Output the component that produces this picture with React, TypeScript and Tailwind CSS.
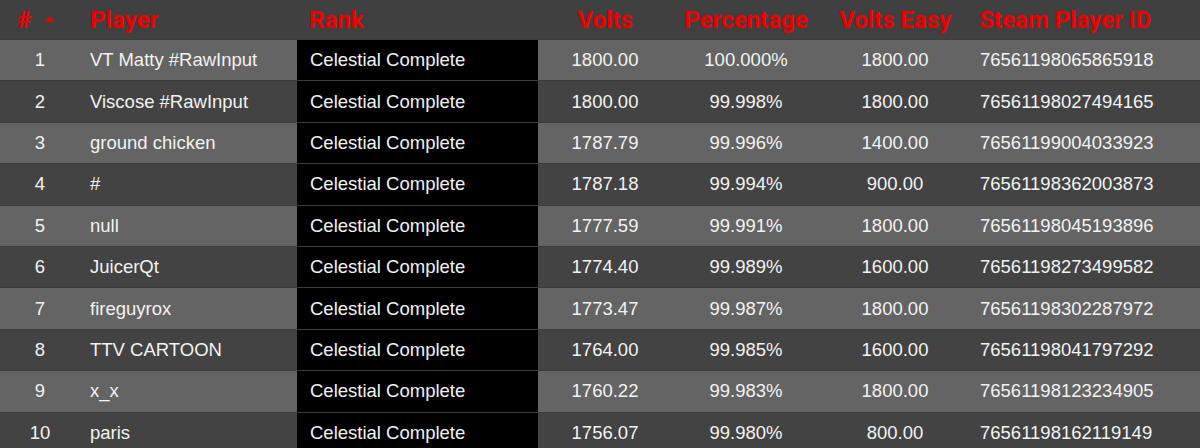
const rows = [
  { n: 1, player: "VT Matty #RawInput", volts: "1800.00", pct: "100.000%", easy: "1800.00", id: "76561198065865918" },
  { n: 2, player: "Viscose #RawInput", volts: "1800.00", pct: "99.998%", easy: "1800.00", id: "76561198027494165" },
  { n: 3, player: "ground chicken", volts: "1787.79", pct: "99.996%", easy: "1400.00", id: "76561199004033923" },
  { n: 4, player: "#", volts: "1787.18", pct: "99.994%", easy: "900.00", id: "76561198362003873" },
  { n: 5, player: "null", volts: "1777.59", pct: "99.991%", easy: "1800.00", id: "76561198045193896" },
  { n: 6, player: "JuicerQt", volts: "1774.40", pct: "99.989%", easy: "1600.00", id: "76561198273499582" },
  { n: 7, player: "fireguyrox", volts: "1773.47", pct: "99.987%", easy: "1800.00", id: "76561198302287972" },
  { n: 8, player: "TTV CARTOON", volts: "1764.00", pct: "99.985%", easy: "1600.00", id: "76561198041797292" },
  { n: 9, player: "x_x", volts: "1760.22", pct: "99.983%", easy: "1800.00", id: "76561198123234905" },
  { n: 10, player: "paris", volts: "1756.07", pct: "99.980%", easy: "800.00", id: "76561198162119149" },
];

const cols = "grid grid-cols-[80px_217px_241px_134px_148px_150px_1fr]";

export default function App() {
  return (
    <div className="w-[1200px] h-[448px] overflow-hidden bg-[#434343]">
      {/* Header */}
      <div
        className={`${cols} h-[39px] items-center bg-[#404040] text-[#ee0000] text-[24px] font-bold`}
        style={{ fontFamily: "Roboto, sans-serif" }}
      >
        <div className="flex items-center pl-[17px] gap-[14px]">
          <span>#</span>
          <svg width="9" height="6" viewBox="0 0 9 6" className="mt-[-2px]">
            <polygon points="4.5,0 9,6 0,6" fill="#ee0000" />
          </svg>
        </div>
        <div className="pl-[10px]">Player</div>
        <div className="pl-[12px]">Rank</div>
        <div className="text-center">Volts</div>
        <div className="text-center">Percentage</div>
        <div className="text-center">Volts Easy</div>
        <div className="pl-[9px]">Steam Player ID</div>
      </div>

      {/* Body */}
      <div className="text-[18.5px] text-[#f2f2f2]" style={{ fontFamily: "'Liberation Sans', Arial, sans-serif" }}>
        {rows.map((r) => (
          <div
            key={r.n}
            className={`${cols} h-[41.4px] items-stretch border-t border-[#3c3c3c] ${
              r.n % 2 === 1 ? "bg-[#646464]" : "bg-[#434343]"
            }`}
          >
            <div className="flex items-center justify-center">{r.n}</div>
            <div className="flex items-center pl-[10px]">{r.player}</div>
            <div className="flex items-center pl-[13px] bg-black">Celestial Complete</div>
            <div className="flex items-center justify-center">{r.volts}</div>
            <div className="flex items-center justify-center">{r.pct}</div>
            <div className="flex items-center justify-center">{r.easy}</div>
            <div className="flex items-center pl-[10px]">{r.id}</div>
          </div>
        ))}
      </div>
    </div>
  );
}
